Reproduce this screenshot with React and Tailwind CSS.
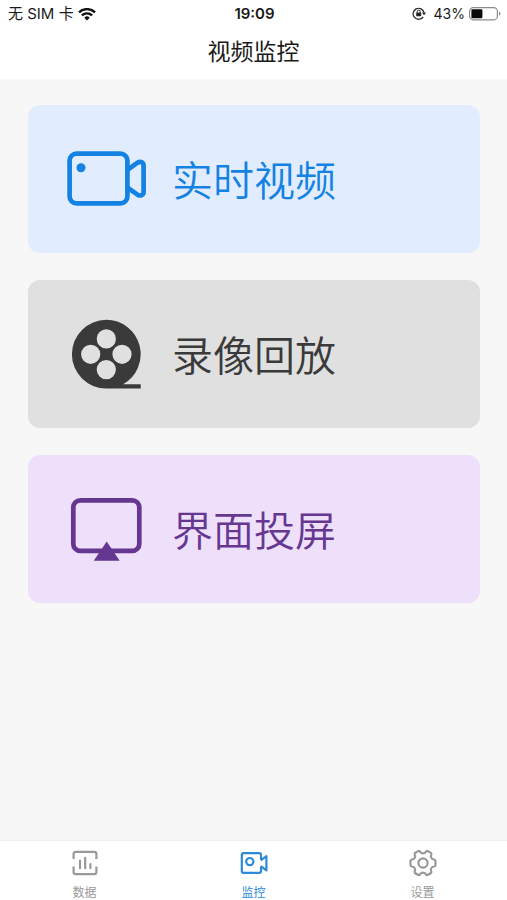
import React from "react";

function WifiIcon() {
  return (
    <svg viewBox="0 0 18 13" className="h-[13px] w-[18px]" fill="none" stroke="#111" strokeWidth="2.3" aria-hidden="true">
      <path d="M1 4.4 A11.3 11.3 0 0 1 17 4.4" />
      <path d="M3.9 7.4 A7.2 7.2 0 0 1 14.1 7.4" />
      <path d="M6.3 9.7 A3.8 3.8 0 0 1 11.7 9.7 L9 12.4 Z" fill="#111" stroke="none" />
    </svg>
  );
}

function RotationLockIcon() {
  return (
    <svg viewBox="0 0 14 14" className="h-3.5 w-3.5" fill="none" stroke="#222" aria-hidden="true">
      <path d="M11.2 9.8 A5.5 5.5 0 1 1 12 5.7" strokeWidth="1.2" />
      <path d="M10 5.6 H14 L12 8.2 Z" fill="#222" stroke="none" />
      <rect x="4.2" y="5.4" width="5" height="3.8" rx="0.5" fill="#222" stroke="none" />
      <path d="M5.2 5.7 V4.6 a1.5 1.5 0 0 1 3 0 V5.7" strokeWidth="1" />
    </svg>
  );
}

function BatteryIcon() {
  return (
    <svg viewBox="0 0 32 14" className="h-3.5 w-8" fill="none" aria-hidden="true">
      <rect x="0.6" y="0.6" width="27.8" height="12.2" rx="3.8" stroke="#8c8c8c" strokeWidth="1.2" />
      <rect x="2.4" y="2.2" width="11" height="9" rx="1.2" fill="#0a0a0a" />
      <path d="M30 4.4 a2.4 2.4 0 0 1 0 4.4 Z" fill="#8c8c8c" />
    </svg>
  );
}

function CameraIcon() {
  return (
    <svg viewBox="0 0 80 80" className="h-20 w-20 shrink-0" fill="none" stroke="currentColor" strokeWidth="4.7" strokeLinejoin="round" aria-hidden="true">
      <rect x="3.6" y="14.6" width="57.8" height="49.8" rx="7" />
      <circle cx="15" cy="28.7" r="4.5" fill="currentColor" stroke="none" />
      <path d="M62 30.5 L71.5 23.7 Q73.6 22.4 75.6 23.2 Q77.6 24.2 77.6 26.5 V53 Q77.6 55.2 75.6 56.2 Q73.6 57 71.5 55.7 L62 49" />
    </svg>
  );
}

function ReelIcon() {
  return (
    <svg viewBox="0 0 80 80" className="h-20 w-20 shrink-0" fill="currentColor" aria-hidden="true">
      <path
        fillRule="evenodd"
        d="M40.3 5.8 A34.4 34.4 0 0 1 57.1 70.2 H74.7 V74.6 H40.3 A34.4 34.4 0 0 1 40.3 5.8 Z
           M40.3 15.3 a9.6 9.6 0 1 0 0 19.2 a9.6 9.6 0 1 0 0 -19.2 Z
           M40.3 46 a9.6 9.6 0 1 0 0 19.2 a9.6 9.6 0 1 0 0 -19.2 Z
           M24.7 30.7 a9.6 9.6 0 1 0 0 19.2 a9.6 9.6 0 1 0 0 -19.2 Z
           M56 30.7 a9.6 9.6 0 1 0 0 19.2 a9.6 9.6 0 1 0 0 -19.2 Z"
      />
    </svg>
  );
}

function ScreenCastIcon() {
  return (
    <svg viewBox="0 0 80 80" className="h-20 w-20 shrink-0" fill="none" aria-hidden="true">
      <rect x="7.3" y="11.3" width="66" height="50.6" rx="7" stroke="currentColor" strokeWidth="4.7" />
      <path d="M40.7 52.5 L53.7 71.8 H27.7 Z" fill="currentColor" />
    </svg>
  );
}

function DataTabIcon() {
  return (
    <svg viewBox="0 0 28 28" className="h-7 w-7" fill="none" stroke="currentColor" strokeWidth="2.2" aria-hidden="true">
      <path d="M2.6 10 V5 Q2.6 2.8 4.8 2.8 H23.2 Q25.4 2.8 25.4 5 V10" />
      <path d="M2.6 17.5 V23 Q2.6 25.2 4.8 25.2 H23.2 Q25.4 25.2 25.4 23 V17.5" />
      <path d="M9 11.5 V19.2 M14.2 8.8 V19.2 M19.4 15 V19.2" strokeLinecap="round" />
    </svg>
  );
}

function MonitorTabIcon() {
  return (
    <svg viewBox="0 0 28 28" className="h-7 w-7" fill="none" stroke="currentColor" strokeWidth="2.2" strokeLinejoin="round" aria-hidden="true">
      <path d="M21 11 V6 Q21 4.2 19.2 4.2 H3.6 Q1.8 4.2 1.8 6 V22 Q1.8 23.8 3.6 23.8 H19.2 Q21 23.8 21 22 V17.4" />
      <path d="M20.8 11.4 L26.4 7.2 V21.4 L20.8 17.2" />
      <circle cx="9.8" cy="12.6" r="3.6" />
    </svg>
  );
}

function SettingsTabIcon() {
  return (
    <svg viewBox="0 0 28 28" className="h-7 w-7" fill="none" stroke="currentColor" strokeWidth="2.2" strokeLinejoin="round" aria-hidden="true">
      <path d="M9.6 2 Q10.6 1.8 11.2 2.9 Q12.2 4.3 14 4.3 Q15.8 4.3 16.8 2.9 Q17.4 1.8 18.4 2 Q20.4 2.8 22 4 Q22.6 4.7 22.2 5.8 Q21.5 7.6 22.4 9 Q23.3 10.4 25 10.5 Q26.2 10.7 26.4 11.6 Q26.8 14 26.4 16.4 Q26.2 17.3 25 17.5 Q23.3 17.6 22.4 19 Q21.5 20.4 22.2 22.2 Q22.6 23.3 22 24 Q20.4 25.2 18.4 26 Q17.4 26.2 16.8 25.1 Q15.8 23.7 14 23.7 Q12.2 23.7 11.2 25.1 Q10.6 26.2 9.6 26 Q7.6 25.2 6 24 Q5.4 23.3 5.8 22.2 Q6.5 20.4 5.6 19 Q4.7 17.6 3 17.5 Q1.8 17.3 1.6 16.4 Q1.2 14 1.6 11.6 Q1.8 10.7 3 10.5 Q4.7 10.4 5.6 9 Q6.5 7.6 5.8 5.8 Q5.4 4.7 6 4 Q7.6 2.8 9.6 2 Z" />
      <circle cx="14" cy="14" r="4.6" />
    </svg>
  );
}

const cards = [
  { label: "实时视频", Icon: CameraIcon, tone: "bg-[#e1edfe] text-[#1482e3]" },
  { label: "录像回放", Icon: ReelIcon, tone: "bg-[#e0e0e0] text-[#3a3a3a]" },
  { label: "界面投屏", Icon: ScreenCastIcon, tone: "bg-[#eee0fa] text-[#663791]" },
];

const tabs = [
  { label: "数据", Icon: DataTabIcon, tone: "text-[#999999]" },
  { label: "监控", Icon: MonitorTabIcon, tone: "text-[#2c8ad8]", current: true },
  { label: "设置", Icon: SettingsTabIcon, tone: "text-[#999999]" },
];

export default function App() {
  return (
    <div className="flex min-h-screen flex-col bg-[#f7f7f7] font-[Inter,'Noto_Sans_CJK_SC',sans-serif]">
      <header className="bg-white text-[#1a1a1a]">
        <div className="grid h-7 grid-cols-3 items-center pr-1.5 pl-2 text-[15px] leading-5">
          <div className="flex items-center gap-1">
            <span>无 SIM 卡</span>
            <WifiIcon />
          </div>
          <time className="text-center font-semibold">19:09</time>
          <div className="flex items-center justify-end gap-2">
            <RotationLockIcon />
            <div className="flex items-center gap-1">
              <span className="text-sm">43%</span>
              <BatteryIcon />
            </div>
          </div>
        </div>
        <h1 className="pt-2 pb-[11px] text-center text-[23px] leading-8">视频监控</h1>
      </header>

      <main className="flex flex-1 flex-col gap-[27px] pt-[26px] pr-[27px] pb-7 pl-7">
        {cards.map(({ label, Icon, tone }) => (
          <button key={label} type="button" className={`flex h-[148px] items-center gap-[26px] rounded-xl pl-[38px] ${tone}`}>
            <Icon />
            <span className="pt-1 text-[41px] leading-[56px] font-[350]">{label}</span>
          </button>
        ))}
      </main>

      <nav className="grid h-[60px] grid-cols-3 border-t border-[#f0f0f0] bg-white">
        {tabs.map(({ label, Icon, tone, current }) => (
          <button
            key={label}
            type="button"
            aria-current={current ? "page" : undefined}
            className={`flex flex-col items-center gap-2 pt-2 text-xs ${tone}`}
          >
            <Icon />
            <span>{label}</span>
          </button>
        ))}
      </nav>
    </div>
  );
}
